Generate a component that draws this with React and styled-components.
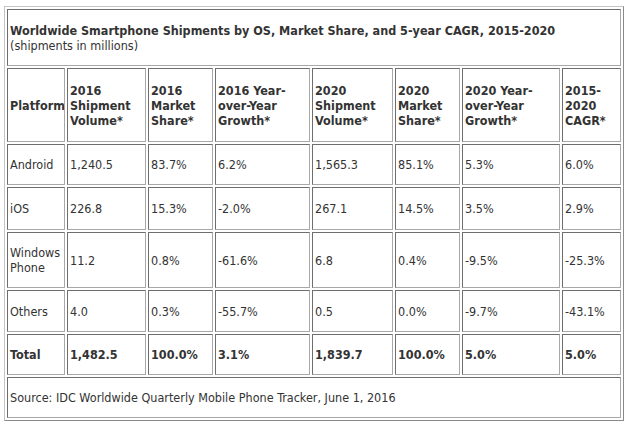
import React from 'react';
import styled, { createGlobalStyle } from 'styled-components';

const GlobalStyle = createGlobalStyle`
  body {
    margin: 0;
    background: #ffffff;
    font-family: "DejaVu Sans Condensed", "DejaVu Sans", Verdana, sans-serif;
  }
`;

const Page = styled.div`
  padding: 6px 0 0 4px;
`;

const Table = styled.table`
  width: 620px;
  table-layout: fixed;
  border-collapse: separate;
  border-spacing: 2px;
  border: 1px solid;
  border-color: #c4c4c4 #8a8a8a #8a8a8a #c4c4c4;
  color: #333333;
  font-size: 12.5px;
  line-height: 15px;
`;

const Row = styled.tr`
  height: ${({ h }) => h}px;
`;

const Cell = styled.td`
  padding: 0 2px;
  border: 1px solid;
  border-color: #6e6e6e #a8a8a8 #a8a8a8 #6e6e6e;
  vertical-align: middle;
  text-align: left;
  font-weight: ${({ bold }) => (bold ? 700 : 400)};
  overflow: hidden;
`;

const HeadCell = styled(Cell).attrs({ as: 'th' })`
  font-weight: 700;
`;

const Title = styled.div`
  font-weight: 700;
`;

const widths = [58, 79, 65, 95, 81, 65, 98, 59];

const headers = [
  'Platform',
  '2016 Shipment Volume*',
  '2016 Market Share*',
  '2016 Year-over-Year Growth*',
  '2020 Shipment Volume*',
  '2020 Market Share*',
  '2020 Year-over-Year Growth*',
  '2015-2020 CAGR*',
];

const rows = [
  { h: 41, cells: ['Android', '1,240.5', '83.7%', '6.2%', '1,565.3', '85.1%', '5.3%', '6.0%'] },
  { h: 43, cells: ['iOS', '226.8', '15.3%', '-2.0%', '267.1', '14.5%', '3.5%', '2.9%'] },
  { h: 56, cells: ['Windows Phone', '11.2', '0.8%', '-61.6%', '6.8', '0.4%', '-9.5%', '-25.3%'] },
  { h: 42, cells: ['Others', '4.0', '0.3%', '-55.7%', '0.5', '0.0%', '-9.7%', '-43.1%'] },
  { h: 41, bold: true, cells: ['Total', '1,482.5', '100.0%', '3.1%', '1,839.7', '100.0%', '5.0%', '5.0%'] },
];

export default function App() {
  return (
    <Page>
      <GlobalStyle />
      <Table>
        <colgroup>
          {widths.map((w, i) => (
            <col key={i} style={{ width: w }} />
          ))}
        </colgroup>
        <tbody>
          <Row h={57}>
            <Cell colSpan={8}>
              <Title>Worldwide Smartphone Shipments by OS, Market Share, and 5-year CAGR, 2015-2020</Title>
              <div>(shipments in millions)</div>
            </Cell>
          </Row>
          <Row h={74}>
            {headers.map((t) => (
              <HeadCell key={t}>{t}</HeadCell>
            ))}
          </Row>
          {rows.map((r) => (
            <Row h={r.h} key={r.cells[0]}>
              {r.cells.map((c, i) => (
                <Cell key={i} bold={r.bold}>{c}</Cell>
              ))}
            </Row>
          ))}
          <Row h={41}>
            <Cell colSpan={8}>Source: IDC Worldwide Quarterly Mobile Phone Tracker, June 1, 2016</Cell>
          </Row>
        </tbody>
      </Table>
    </Page>
  );
}
